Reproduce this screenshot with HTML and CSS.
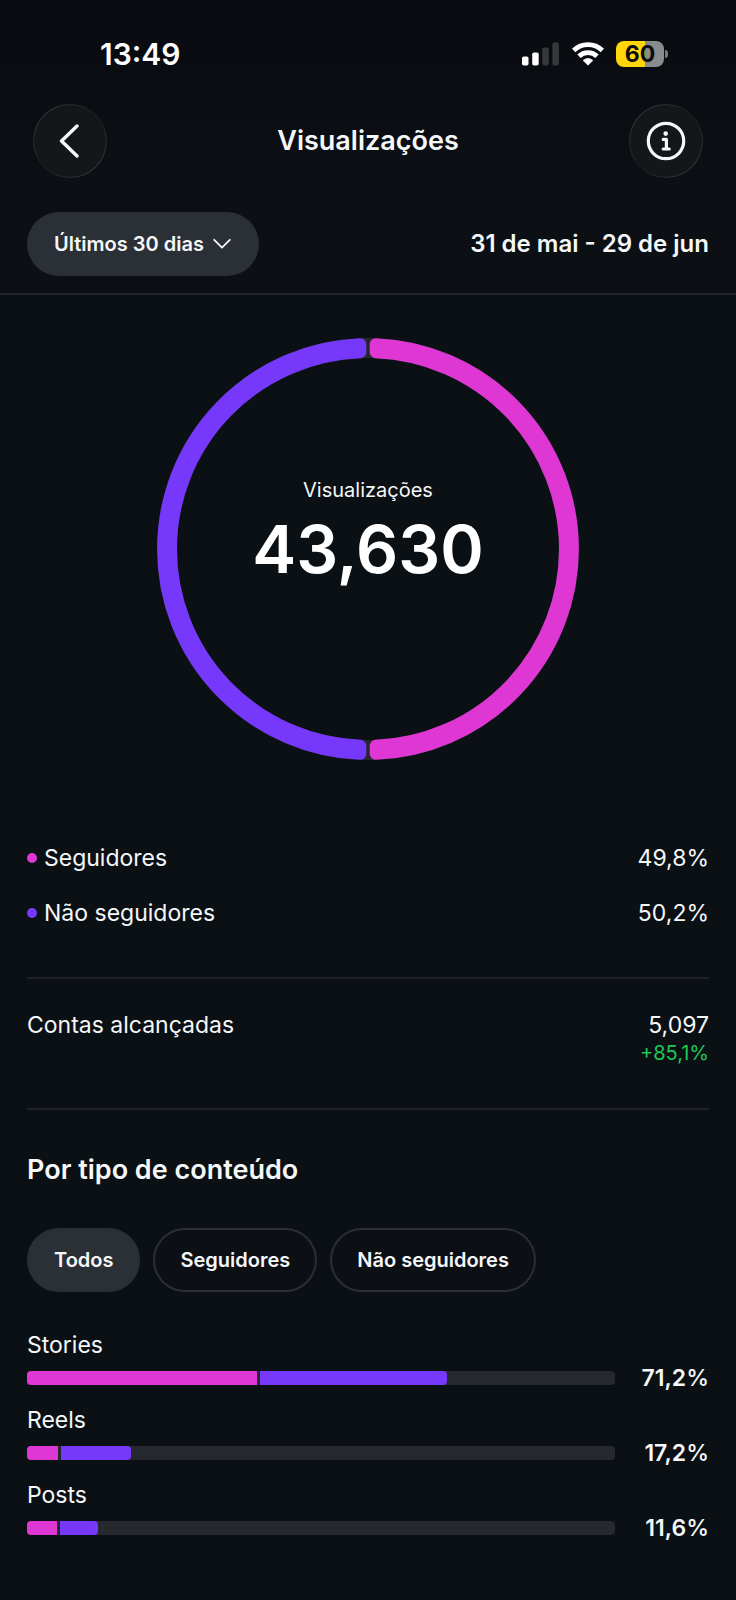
FILE: index.html
```
<!DOCTYPE html>
<html lang="pt-BR">
<head>
    <meta charset="UTF-8">
    <meta name="viewport" content="width=device-width, initial-scale=1">
    <title>Visualizações</title>
    <link rel="stylesheet" href="styles.css">
</head>
<body>
    <header class="top">
        <div class="status-bar">
            <span class="clock">13:49</span>
            <div class="status-icons">
                <svg class="signal" width="38" height="24" viewBox="0 0 38 24" aria-hidden="true">
                    <rect x="0" y="14.5" width="6.5" height="9" rx="1.8" fill="#fff"/>
                    <rect x="10.2" y="10.5" width="6.5" height="13" rx="1.8" fill="#fff"/>
                    <rect x="20.3" y="5.5" width="6.5" height="18" rx="1.8" fill="#36393c"/>
                    <rect x="30.4" y="0.5" width="6.5" height="23" rx="1.8" fill="#36393c"/>
                </svg>
                <svg class="wifi" width="32" height="24" viewBox="0 0 32 24" aria-hidden="true">
                    <path d="M1.700 8.500A20.500 20.500 0 0 1 30.300 8.500" fill="none" stroke="#fff" stroke-width="4.8"/>
                    <path d="M7 14.300A12.800 12.800 0 0 1 25 14.300" fill="none" stroke="#fff" stroke-width="4.8"/>
                    <path d="M11.2 18.4Q16 14.6 20.8 18.4L16 23.2Z" fill="#fff" stroke="#fff" stroke-width="0.8" stroke-linejoin="round"/>
                </svg>
                <div class="battery"><span class="battery-level">60</span></div>
            </div>
        </div>

        <nav class="nav">
            <button class="round-btn" aria-label="Voltar">
                <svg width="22" height="34" viewBox="0 0 22 34" aria-hidden="true">
                    <path d="M18 2L2.5 17L18 32" fill="none" stroke="#f5f7f9" stroke-width="3.4" stroke-linecap="round" stroke-linejoin="round"/>
                </svg>
            </button>
            <h1>Visualizações</h1>
            <button class="round-btn" aria-label="Informações">
                <svg width="40" height="40" viewBox="0 0 40 40" fill="none" stroke="#f5f7f9" aria-hidden="true">
                    <circle cx="20" cy="20" r="17.7" stroke-width="3.2"/>
                    <circle cx="19.7" cy="12.6" r="2.3" fill="#f5f7f9" stroke="none"/>
                    <path d="M17.2 18.4H20.4V28M17.2 28H23.2" stroke-width="3.2" stroke-linecap="round" stroke-linejoin="round"/>
                </svg>
            </button>
        </nav>

        <div class="filter">
            <div class="period">
                <select aria-label="Período">
                    <option>Últimos 30 dias</option>
                    <option>Últimos 7 dias</option>
                </select>
                <svg width="18" height="12" viewBox="0 0 18 12" aria-hidden="true">
                    <path d="M1.200 1.800L9 9.600L16.800 1.800" fill="none" stroke="#f5f7f9" stroke-width="1.8" stroke-linecap="round" stroke-linejoin="round"/>
                </svg>
            </div>
            <span class="dates">31 de mai - 29 de jun</span>
        </div>
    </header>

    <main>
        <div class="ring">
            <svg viewBox="0 0 422 422" aria-hidden="true">
                <circle cx="211" cy="211" r="201" fill="none" stroke="#25282c" stroke-width="20"/>
                <path class="seg-followers" d="M218.7 6.15A205 205 0 0 1 218.7 415.85L218.7 407.85A197 197 0 0 0 218.7 14.15Z"/>
                <path class="seg-others" d="M203.3 6.15A205 205 0 0 0 203.3 415.85L203.3 407.85A197 197 0 0 1 203.3 14.15Z"/>
            </svg>
            <div class="ring-text">
                <span class="ring-label">Visualizações</span>
                <strong class="ring-total">43,630</strong>
            </div>
        </div>

        <section class="legend">
            <div class="row">
                <span class="name"><i class="dot followers"></i>Seguidores</span>
                <span>49,8%</span>
            </div>
            <div class="row">
                <span class="name"><i class="dot others"></i>Não seguidores</span>
                <span>50,2%</span>
            </div>
        </section>

        <section class="reach">
            <div class="row">
                <span>Contas alcançadas</span>
                <span>5,097</span>
            </div>
            <div class="delta">+85,1%</div>
        </section>

        <section class="content-type">
            <h2>Por tipo de conteúdo</h2>
            <div class="chips">
                <button class="chip active">Todos</button>
                <button class="chip">Seguidores</button>
                <button class="chip">Não seguidores</button>
            </div>

            <div class="stat">
                <div class="stat-name">Stories</div>
                <div class="stat-line">
                    <div class="bar">
                        <div class="followers" style="width: 39.1%"></div>
                        <div class="others" style="width: 31.8%"></div>
                    </div>
                    <span class="percent">71,2<span>%</span></span>
                </div>
            </div>
            <div class="stat">
                <div class="stat-name">Reels</div>
                <div class="stat-line">
                    <div class="bar">
                        <div class="followers" style="width: 5.3%"></div>
                        <div class="others" style="width: 11.9%"></div>
                    </div>
                    <span class="percent">17,2<span>%</span></span>
                </div>
            </div>
            <div class="stat">
                <div class="stat-name">Posts</div>
                <div class="stat-line">
                    <div class="bar">
                        <div class="followers" style="width: 5.1%"></div>
                        <div class="others" style="width: 6.5%"></div>
                    </div>
                    <span class="percent">11,6<span>%</span></span>
                </div>
            </div>
        </section>
    </main>
</body>
</html>
```

FILE: styles.css
```
* {
    box-sizing: border-box;
}
body {
    margin: 0;
    background-color: #0b1014;
    color: #f5f7f9;
    font-family: Inter, "Liberation Sans", sans-serif;
    font-size: 23px;
    line-height: 30px;
}
button, select {
    font-family: inherit;
    color: inherit;
    cursor: pointer;
}
h1, h2 {
    margin: 0;
    font-size: 27px;
    font-weight: 600;
    line-height: 36px;
}

/* Header */
.top {
    background: linear-gradient(#080a0f, #0c0f14 60%);
    border-bottom: 2px solid #212428;
    padding-top: 40px;
}
.status-bar {
    display: flex;
    justify-content: space-between;
    align-items: center;
    height: 28px;
    padding: 0 68px 0 100px;
}
.clock {
    font-size: 30px;
    font-weight: 600;
    color: #fff;
}
.status-icons {
    display: flex;
    align-items: center;
    gap: 12px;
}
.battery {
    display: flex;
    align-items: center;
}
.battery-level {
    width: 48px;
    height: 26px;
    border-radius: 8px;
    background: linear-gradient(90deg, #ffd60a 60%, #8a8b8d 60%);
    color: #0b0b0b;
    font-size: 23px;
    font-weight: 700;
    line-height: 26px;
    text-align: center;
}
.battery::after {
    content: "";
    width: 3px;
    height: 8px;
    margin-left: 1px;
    border-radius: 0 3px 3px 0;
    background-color: #77787a;
}
.nav {
    display: flex;
    justify-content: space-between;
    align-items: center;
    padding: 36px 33px 34px;
}
.round-btn {
    display: flex;
    align-items: center;
    justify-content: center;
    width: 74px;
    height: 74px;
    padding: 0;
    border: 1px solid transparent;
    border-radius: 50%;
    background: linear-gradient(#14171a, #14171a) padding-box,
                linear-gradient(135deg, #3a4046, #1b1f23 45%, #1b1f23 55%, #3a4046) border-box;
}
.filter {
    display: flex;
    justify-content: space-between;
    align-items: center;
    padding: 0 27px 17px;
}
.period {
    display: grid;
    align-items: center;
}
.period select, .period svg {
    grid-area: 1 / 1;
}
.period select {
    appearance: none;
    height: 64px;
    padding: 0 55px 0 27px;
    border: 0;
    border-radius: 32px;
    background-color: #2b2f36;
    font-size: 20px;
    font-weight: 600;
}
.period svg {
    justify-self: end;
    margin-right: 28px;
    pointer-events: none;
}
.dates {
    font-size: 24px;
    font-weight: 600;
}

main {
    padding: 43px 27px;
}

/* Ring chart */
.ring {
    display: grid;
    width: 62%;
    max-width: 422px;
    margin: 0 auto 83px;
}
.ring svg, .ring-text {
    grid-area: 1 / 1;
}
.ring svg {
    display: block;
    width: 100%;
}
.ring path {
    stroke-width: 12;
    stroke-linejoin: round;
}
.seg-followers {
    fill: #df37d3;
    stroke: #df37d3;
}
.seg-others {
    fill: #7638fa;
    stroke: #7638fa;
}
.ring-text {
    display: flex;
    flex-direction: column;
    align-items: center;
    justify-content: center;
    padding-bottom: 30px;
}
.ring-label {
    font-size: 20px;
}
.ring-total {
    font-size: 66px;
    font-weight: 600;
    line-height: 88px;
    color: #fff;
}

/* Legend and reach */
.row {
    display: flex;
    justify-content: space-between;
}
.legend {
    display: flex;
    flex-direction: column;
    gap: 25px;
    padding-bottom: 49px;
    border-bottom: 2px solid #1e2226;
}
.name {
    display: flex;
    align-items: center;
    gap: 7px;
}
.dot {
    width: 10px;
    height: 10px;
    border-radius: 50%;
}
.followers {
    background-color: #df37d3;
}
.others {
    background-color: #7638fa;
}
.reach {
    padding: 31px 0 42px;
    border-bottom: 2px solid #1e2226;
}
.delta {
    color: #1fc755;
    font-size: 20px;
    line-height: 26px;
    text-align: right;
}

/* Content type */
.content-type {
    padding-top: 42px;
}
.chips {
    display: flex;
    flex-wrap: wrap;
    gap: 13px;
    margin: 40px 0 38px;
}
.chip {
    height: 64px;
    padding: 0 25px;
    border: 2px solid #2b2e33;
    border-radius: 32px;
    background-color: #0c0f14;
    font-size: 20px;
    font-weight: 600;
}
.chip.active {
    background-color: #2b2f36;
    border-color: #2b2f36;
}
.stat {
    margin-bottom: 12px;
}
.stat-line {
    display: flex;
    align-items: center;
    margin-top: 3px;
}
.bar {
    display: flex;
    flex: 1;
    gap: 3px;
    height: 14px;
    border-radius: 4px;
    background-color: #25282c;
    overflow: hidden;
}
.bar .others {
    border-radius: 0 4px 4px 0;
}
.percent {
    width: 94px;
    font-weight: 600;
    text-align: right;
}
.percent span {
    font-weight: 500;
}
```
